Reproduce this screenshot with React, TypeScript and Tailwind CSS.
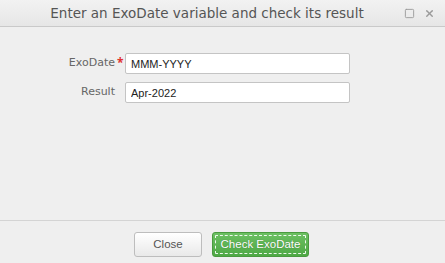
import { Square, X } from 'lucide-react';

export default function App() {
  return (
    <div className="w-[445px] h-[263px] flex flex-col bg-[#efefef] overflow-hidden">
      {/* title bar */}
      <div className="h-[27px] flex items-center border-b border-[#c9c9c9] bg-gradient-to-b from-[#f2f2f2] to-[#e6e6e6]">
        <div
          className="flex-1 text-center text-[13.5px] text-[#555] pl-[10px]"
          style={{ fontFamily: '"DejaVu Sans", Verdana, sans-serif' }}
        >
          Enter an ExoDate variable and check its result
        </div>
        <div className="flex items-center gap-[9px] pr-[10px] text-[#9a9a9a]">
          <Square size={11} strokeWidth={2} />
          <X size={11} strokeWidth={3} />
        </div>
      </div>

      {/* form */}
      <div className="flex-1 flex flex-col gap-[8px] pt-[26px]">
        <div className="flex items-center">
          <label
            className="w-[115px] text-right text-[11px] text-[#666]"
            style={{ fontFamily: '"DejaVu Sans", Verdana, sans-serif' }}
          >
            ExoDate
          </label>
          <span className="w-[10px] text-[#e0322f] text-[12px] font-bold pl-[2px] -mt-[2px]">*</span>
          <input
            readOnly
            value="MMM-YYYY"
            className="w-[225px] h-[21px] px-[5px] bg-white border border-[#c4c4c4] rounded-[2px] text-[11px] text-[#222] outline-none"
            style={{ fontFamily: '"Liberation Sans", Arial, sans-serif' }}
          />
        </div>
        <div className="flex items-center">
          <label
            className="w-[115px] text-right text-[11px] text-[#666]"
            style={{ fontFamily: '"DejaVu Sans", Verdana, sans-serif' }}
          >
            Result
          </label>
          <span className="w-[10px]" />
          <input
            readOnly
            value="Apr-2022"
            className="w-[225px] h-[21px] px-[5px] bg-white border border-[#c4c4c4] rounded-[2px] text-[11px] text-[#222] outline-none"
            style={{ fontFamily: '"Liberation Sans", Arial, sans-serif' }}
          />
        </div>
      </div>

      {/* footer */}
      <div
        className="h-[43px] border-t border-[#d4d4d4] flex items-start justify-center gap-[10px] pt-[11px] pr-[2px]"
        style={{ fontFamily: '"Liberation Sans", Arial, sans-serif' }}
      >
        <button className="w-[68px] h-[25px] rounded-[3px] border border-[#bdbdbd] bg-gradient-to-b from-[#ffffff] to-[#e9e9e9] text-[11.5px] text-[#555]">
          Close
        </button>
        <button className="w-[97px] h-[25px] rounded-[3px] border border-[#4a9a3f] bg-gradient-to-b from-[#6cc062] to-[#4ea845] p-[2px]">
          <span className="flex items-center justify-center w-full h-full border border-dashed border-white/90 rounded-[1px] text-[11.5px] text-white [text-shadow:0_0_1px_rgba(0,0,0,0.35)]">
            Check ExoDate
          </span>
        </button>
      </div>
    </div>
  );
}
